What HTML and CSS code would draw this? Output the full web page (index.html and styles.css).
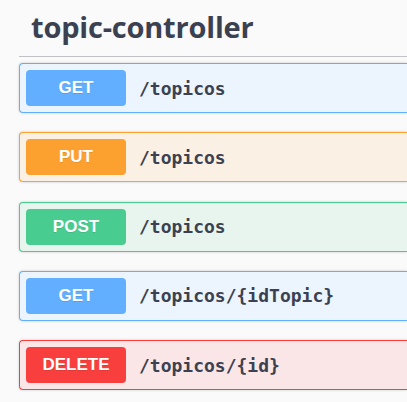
FILE: index.html
```html
<!DOCTYPE html>
<html>
<head>
<meta charset="utf-8">
<link rel="stylesheet" href="styles.css">
</head>
<body>
<div class="tag-section">
  <h3 class="tag"><span>topic-controller</span></h3>
  <div class="ops">
    <div class="opblock get"><span class="method">GET</span><span class="path">/topicos</span></div>
    <div class="opblock put"><span class="method">PUT</span><span class="path">/topicos</span></div>
    <div class="opblock post"><span class="method">POST</span><span class="path">/topicos</span></div>
    <div class="opblock get"><span class="method">GET</span><span class="path">/topicos/{idTopic}</span></div>
    <div class="opblock delete"><span class="method">DELETE</span><span class="path">/topicos/{id}</span></div>
  </div>
</div>
</body>
</html>
```
FILE: styles.css
```css
html, body {
  margin: 0;
  padding: 0;
  background: #fafafa;
  overflow: hidden;
}
body {
  width: 407px;
  height: 402px;
  font-family: "Open Sans", "Liberation Sans", sans-serif;
  color: #3b4151;
}
.tag-section {
  padding-left: 19px;
  width: 388px;
}
.tag {
  margin: 0 0 6px 0;
  height: 56px;
  box-sizing: content-box;
  border-bottom: 1px solid rgba(59, 65, 81, 0.3);
  display: flex;
  align-items: center;
  padding-left: 12px;
  font-size: 29px;
  font-weight: 700;
  letter-spacing: -0.2px;
  line-height: 1;
}
.tag span {
  position: relative;
  top: -2px;
}
.ops {
  display: flex;
  flex-direction: column;
}
.opblock {
  display: flex;
  align-items: center;
  height: 50px;
  box-sizing: border-box;
  padding: 6px;
  border: 1px solid;
  border-right-width: 0;
  border-radius: 4px 0 0 4px;
  margin-bottom: 19.25px;
  box-shadow: 0 0 3px rgba(0, 0, 0, 0.19);
}
.method {
  width: 100px;
  height: 36px;
  border-radius: 4px;
  display: flex;
  align-items: center;
  justify-content: center;
  color: #fff;
  font-size: 17px;
  font-weight: 700;
  font-family: "Liberation Sans", Arial, sans-serif;
  text-shadow: 0 1px 0 rgba(0, 0, 0, 0.1);
}
.path {
  margin-left: 13px;
  font-family: "DejaVu Sans Mono", "Liberation Mono", monospace;
  font-weight: 700;
  font-size: 18px;
  color: #3b4151;
}
.get { background: #ecf4fd; border-color: #61affe; }
.get .method { background: #61affe; }
.put { background: #fbf0e4; border-color: #fca130; }
.put .method { background: #fca130; }
.post { background: #e8f5ee; border-color: #49cc90; }
.post .method { background: #49cc90; }
.delete { background: #fae6e6; border-color: #f93e3e; }
.delete .method { background: #f93e3e; }
```
